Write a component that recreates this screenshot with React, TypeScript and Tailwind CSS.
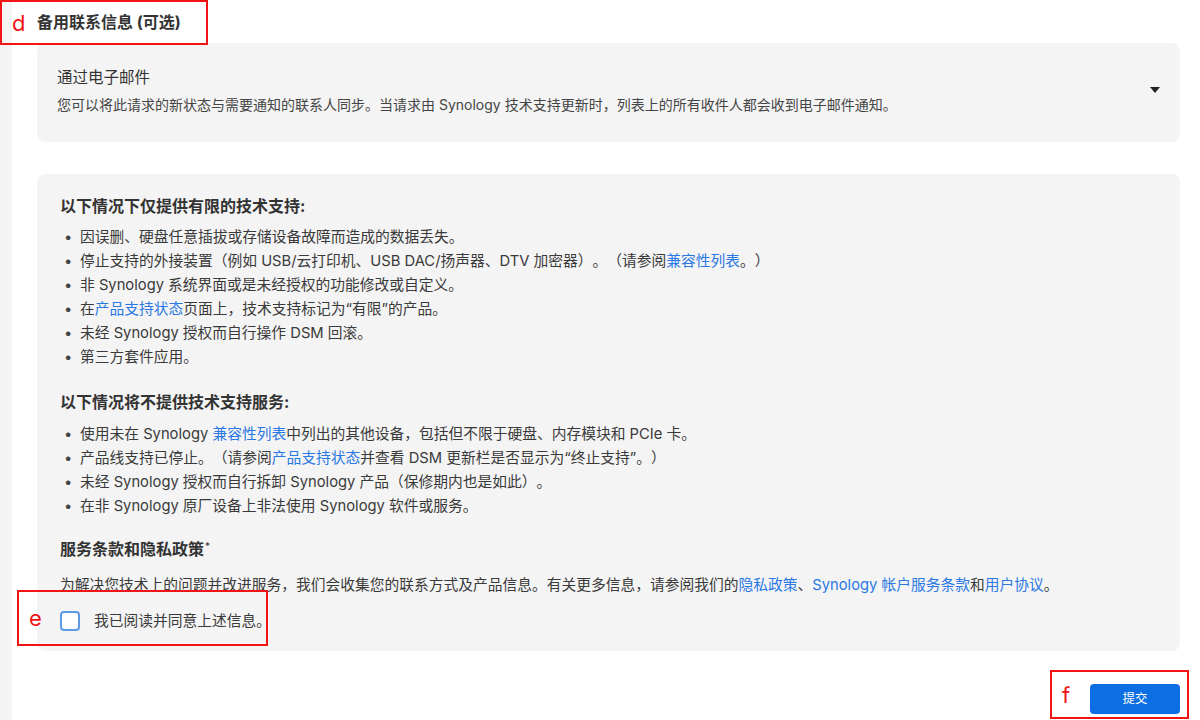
import { Fragment } from "react";

const font = { fontFamily: 'Inter, "Noto Sans CJK SC", sans-serif' };

type Part = string | { link: string };

const limited: Part[][] = [
  ["因误删、硬盘任意插拔或存储设备故障而造成的数据丢失。"],
  ["停止支持的外接装置（例如 USB/云打印机、USB DAC/扬声器、DTV 加密器）。（请参阅", { link: "兼容性列表" }, "。）"],
  ["非 Synology 系统界面或是未经授权的功能修改或自定义。"],
  ["在", { link: "产品支持状态" }, "页面上，技术支持标记为“有限”的产品。"],
  ["未经 Synology 授权而自行操作 DSM 回滚。"],
  ["第三方套件应用。"],
];

const noSupport: Part[][] = [
  ["使用未在 Synology ", { link: "兼容性列表" }, "中列出的其他设备，包括但不限于硬盘、内存模块和 PCIe 卡。"],
  ["产品线支持已停止。（请参阅", { link: "产品支持状态" }, "并查看 DSM 更新栏是否显示为“终止支持”。）"],
  ["未经 Synology 授权而自行拆卸 Synology 产品（保修期内也是如此）。"],
  ["在非 Synology 原厂设备上非法使用 Synology 软件或服务。"],
];

function Text({ parts }: { parts: Part[] }) {
  return (
    <>
      {parts.map((p, i) =>
        typeof p === "string" ? (
          <Fragment key={i}>{p}</Fragment>
        ) : (
          <span key={i} className="text-[#2a78e4]">
            {p.link}
          </span>
        )
      )}
    </>
  );
}

function BulletList({ items }: { items: Part[][] }) {
  return (
    <ul className="text-[14.75px] leading-[24px] text-[#3a3a3a]">
      {items.map((parts, i) => (
        <li key={i} className="flex">
          <span className="w-[20px] shrink-0 pl-[4px] text-[#444]">•</span>
          <span>
            <Text parts={parts} />
          </span>
        </li>
      ))}
    </ul>
  );
}

function Annotation({ letter, className }: { letter: string; className: string }) {
  return (
    <div className={`pointer-events-none absolute border-2 border-[#f01414] ${className}`}>
      <span className="absolute left-[10px] top-1/2 -translate-y-1/2 text-[22px] leading-none text-[#f01414]">
        {letter}
      </span>
    </div>
  );
}

export default function App() {
  return (
    <div
      className="relative flex min-h-[720px] w-[1200px] bg-white [text-spacing-trim:space-all]"
      style={font}
    >
      <div className="w-[12px] shrink-0 bg-[#f4f4f4]" />

      <main className="flex-1 pb-[7px] pl-[25px] pr-[20px] pt-[11px] text-[#333]">
        <h2 className="text-[16px] font-bold leading-[22px] text-[#333]">备用联系信息 (可选)</h2>

        <section className="mt-[10px] flex items-center rounded-lg bg-[#f4f4f4] pb-[27px] pl-[20px] pr-[20px] pt-[24px]">
          <div className="flex-1">
            <div className="text-[15.5px] leading-[22px] text-[#333]">通过电子邮件</div>
            <p className="mt-[6px] text-[14px] leading-[20px] text-[#454545]">
              您可以将此请求的新状态与需要通知的联系人同步。当请求由 Synology 技术支持更新时，列表上的所有收件人都会收到电子邮件通知。
            </p>
          </div>
          <svg width="10" height="6" viewBox="0 0 10 6" className="mt-[-2px]">
            <path d="M0 0h10L5 6z" fill="#222" />
          </svg>
        </section>

        <section className="mt-[32px] rounded-lg bg-[#f4f4f4] pb-[20px] pl-[23px] pr-[20px] pt-[21px]">
          <h3 className="text-[16px] font-bold leading-[22px] text-[#333]">以下情况下仅提供有限的技术支持:</h3>
          <div className="mt-[8px]">
            <BulletList items={limited} />
          </div>

          <h3 className="mt-[22px] text-[16px] font-bold leading-[22px] text-[#333]">以下情况将不提供技术支持服务:</h3>
          <div className="mt-[9px]">
            <BulletList items={noSupport} />
          </div>

          <h3 className="mt-[20px] text-[16px] font-bold leading-[22px] text-[#333]">
            服务条款和隐私政策<sup className="ml-[1px] text-[10px] font-normal">*</sup>
          </h3>
          <p className="mt-[13px] text-[14.75px] leading-[24px] text-[#3a3a3a]">
            为解决您技术上的问题并改进服务，我们会收集您的联系方式及产品信息。有关更多信息，请参阅我们的
            <span className="text-[#2a78e4]">隐私政策</span>、
            <span className="text-[#2a78e4]">Synology 帐户服务条款</span>和
            <span className="text-[#2a78e4]">用户协议</span>。
          </p>

          <label className="mt-[14px] flex items-center gap-[14px]">
            <span className="h-[20px] w-[20px] rounded-[4px] border-2 border-[#5c9ae6] bg-white" />
            <span className="text-[14.75px] leading-[20px] text-[#3a3a3a]">我已阅读并同意上述信息。</span>
          </label>
        </section>

        <div className="mt-[33px] flex justify-end">
          <button className="h-[30px] w-[90px] rounded-[4px] bg-[#0b6fe3] text-[12.5px] text-white">提交</button>
        </div>
      </main>

      <Annotation letter="d" className="left-0 top-0 h-[45px] w-[208px]" />
      <Annotation letter="e" className="left-[17px] top-[590px] h-[56px] w-[251px]" />
      <Annotation letter="f" className="left-[1050px] top-[670px] h-[49px] w-[139px] pl-[12px]" />
    </div>
  );
}
